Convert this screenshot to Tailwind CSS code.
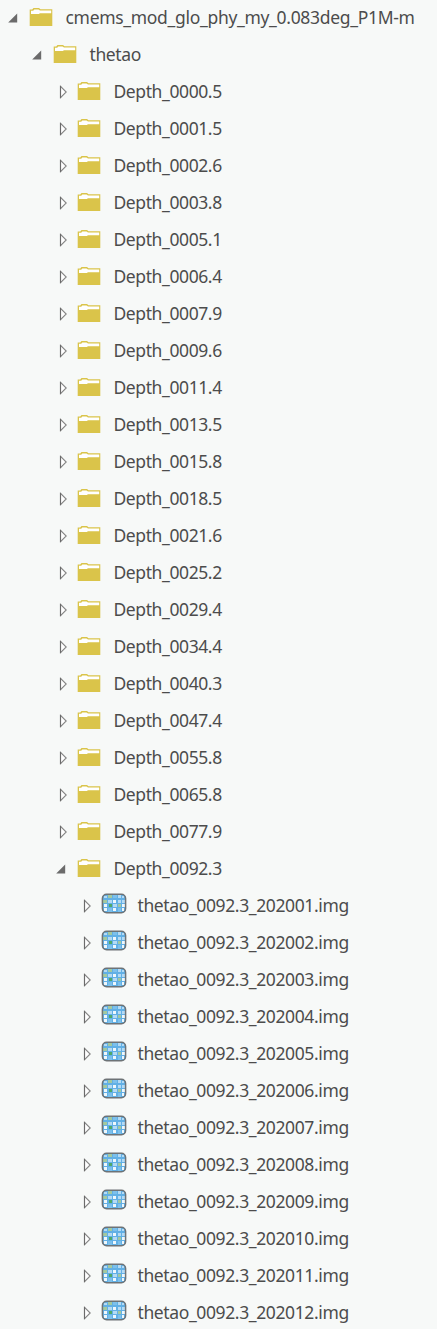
<!DOCTYPE html>
<html lang="en">
<head>
<meta charset="utf-8">
<title>Catalog</title>
<script src="https://cdn.jsdelivr.net/npm/@tailwindcss/browser@4"></script>
</head>
<body class="bg-[#f7f9f8] overflow-hidden">
<svg class="hidden">
  <symbol id="open" viewBox="0 0 10 10"><path d="M9.2 .4V9.4H.2Z" fill="#6b6b6b"/></symbol>
  <symbol id="closed" viewBox="0 0 8 14"><path d="M1.5 1.3V12.7L7.2 7Z" fill="#fff" stroke="#858585" stroke-width="1.1"/><path d="M1.5 1V13" stroke="#6b6b6b" stroke-width="1.1"/></symbol>
  <symbol id="folder" viewBox="0 0 24 20"><path d="M.7 2.5H3.2L4.5 1H10L11.5 2.2H23.3V19H.7Z" fill="#dac44a"/><path d="M2 3.8H4.2L5.3 2.4H9.5L11 3.4H22.2V6.2H11L9.8 7H2Z" fill="#fff"/></symbol>
  <symbol id="raster" viewBox="0 0 26 21">
    <rect x="1.5" y="1.3" width="23" height="18.4" rx="4" fill="#62b0e5"/>
    <path fill="#b4daf4" d="M3 3h3v2H3zM17 2h3v3h-3zM7 7h4v3H7zM12 11h4v3h-4zM17 7h3v3h-3zM21 7h3v3h-3zM21 3h2v2h-2z"/>
    <path fill="#7cc0ec" d="M12 2h4v3h-4zM7 15h4v4H7zM17 15h3v4h-3z"/>
    <path fill="#eef7fc" d="M12 7h3v3h-3zM21 11h3v3h-3zM3 11h3v3H3zM3 15h3v3H3zM12 15h3v3h-3zM21 15h2v3h-2z"/>
    <path fill="#a3c9a0" d="M7 2h4v3H7zM2 7h4v3H2zM17 11h3v3h-3z"/>
    <path fill="#4fa968" d="M8 11h3v3H8z"/>
    <rect x="1.4" y="1.2" width="23.2" height="18.6" rx="4.2" fill="none" stroke="#6e7376" stroke-width="1.5"/>
  </symbol>
</svg>
<main id="tree" class="flex flex-col font-['Noto_Sans',sans-serif] text-[17.5px] text-[#4c4c4c] whitespace-nowrap"></main>
<script>
const rows = [[0, 'open', 'folder', 'cmems_mod_glo_phy_my_0.083deg_P1M-m'], [1, 'open', 'folder', 'thetao']];
'0000.5 0001.5 0002.6 0003.8 0005.1 0006.4 0007.9 0009.6 0011.4 0013.5 0015.8 0018.5 0021.6 0025.2 0029.4 0034.4 0040.3 0047.4 0055.8 0065.8 0077.9 0092.3'.split(' ')
  .forEach(d => rows.push([2, d === '0092.3' ? 'open' : 'closed', 'folder', 'Depth_' + d]));
for (let m = 1; m <= 12; m++) rows.push([3, 'closed', 'raster', 'thetao_0092.3_2020' + String(m).padStart(2, '0') + '.img']);
const arrows = {
  open: '<svg class="w-[10px] h-[10px] ml-[7.5px] mt-[-1px]"><use href="#open"/></svg>',
  closed: '<svg class="w-2 h-3.5 ml-[11px] mt-[-1px]"><use href="#closed"/></svg>'
};
const icons = {
  folder: '<svg class="w-6 h-5 shrink-0 ml-[29px] mt-[-3px]"><use href="#folder"/></svg>',
  raster: '<svg class="w-[26px] h-[21px] shrink-0 ml-[29px] mt-[-6px]"><use href="#raster"/></svg>'
};
const tracking = ['tracking-[-0.31px]', 'tracking-[-0.4px]', 'tracking-[-0.4px]', 'tracking-[-0.38px]'];
document.getElementById('tree').innerHTML = rows.map(([level, arrow, icon, label]) =>
  `<div class="flex items-center h-[37px]" style="padding-left:${level * 24}px">
    <span class="w-0 shrink-0">${arrows[arrow]}</span>${icons[icon]}
    <span class="${icon === 'folder' ? 'ml-[12.5px]' : 'ml-[10.5px]'} mt-[-2px] ${tracking[level]}">${label}</span>
  </div>`).join('');
</script>
</body>
</html>
